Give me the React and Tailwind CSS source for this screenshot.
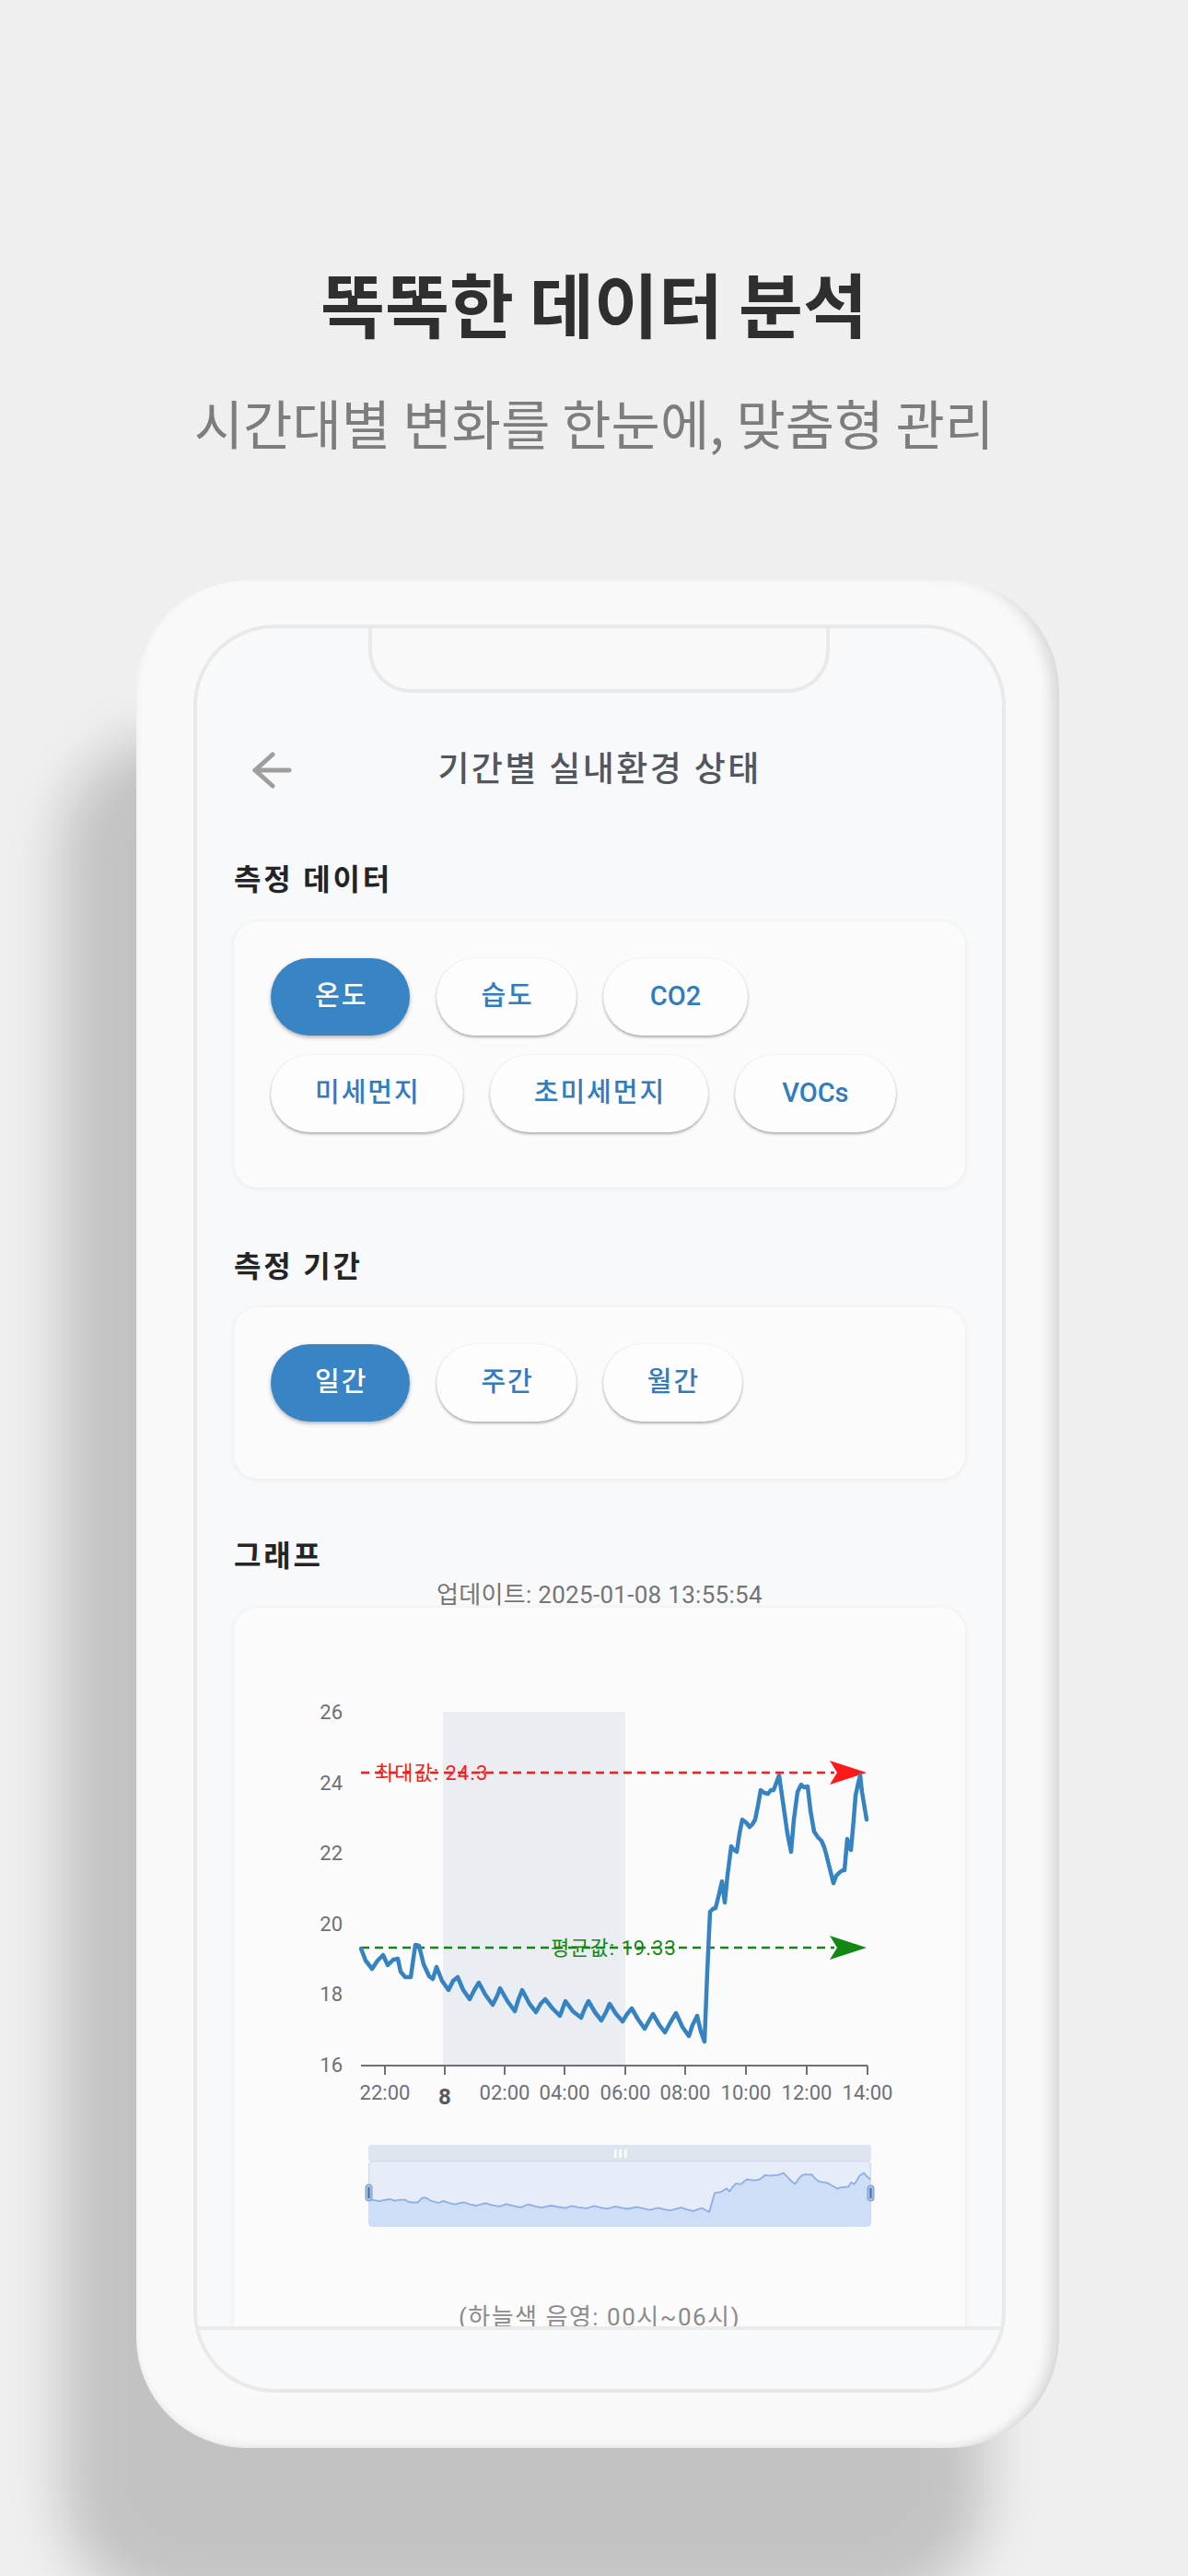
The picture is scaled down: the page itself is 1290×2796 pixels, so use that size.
import React from "react";

const PTS = [[392,2115],[397,2128],[404,2137],[410,2128],[416,2122],[421,2133],[427,2127],[432,2126],[435,2140],[440,2146],[446,2146],[449,2125],[451,2111],[455,2112],[460,2132],[466,2145],[470,2148],[474,2135],[480,2150],[487,2160],[492,2150],[497,2146],[503,2160],[510,2170],[515,2160],[520,2152],[527,2165],[535,2176],[540,2166],[543,2158],[551,2172],[559,2183],[563,2170],[567,2160],[575,2175],[582,2184],[587,2175],[592,2170],[600,2180],[608,2188],[611,2180],[614,2172],[622,2183],[631,2190],[635,2180],[639,2172],[646,2184],[653,2193],[658,2184],[662,2175],[669,2186],[676,2194],[681,2186],[686,2180],[693,2192],[700,2202],[705,2193],[709,2186],[716,2198],[722,2206],[728,2195],[734,2185],[741,2200],[748,2210],[752,2198],[757,2188],[761,2205],[765,2216],[768,2140],[771,2075],[774,2072],[777,2071],[781,2055],[784,2042],[787,2065],[790,2035],[794,2004],[797,2008],[800,2010],[803,1990],[806,1975],[810,1978],[814,1983],[817,1980],[820,1975],[823,1960],[826,1943],[830,1946],[834,1947],[837,1943],[840,1943],[843,1935],[846,1927],[849,1948],[852,1969],[855,1990],[859,2010],[862,1975],[866,1945],[870,1937],[873,1940],[877,1939],[880,1965],[884,1988],[888,1994],[892,1998],[895,2005],[897,2012],[901,2028],[905,2044],[908,2036],[912,2032],[915,2030],[917,2030],[920,1996],[922,2006],[924,2008],[927,1975],[929,1949],[932,1935],[934,1927],[936,1945],[938,1957],[941,1975]];

const FONT = "Roboto, 'Noto Sans CJK KR', sans-serif";

function Chart() {
  const line = PTS.map((p, i) => (i ? "L" : "M") + p[0] + " " + p[1]).join(" ");
  const miniPts = PTS.map(([x, y]) => [400 + (x - 392) * (546 / 550), 2404.4 - (2241 - y) * 0.1462]);
  const mini = miniPts.map((p, i) => (i ? "L" : "M") + p[0].toFixed(1) + " " + p[1].toFixed(1)).join(" ");
  const miniArea = mini + " L945 2416 L401 2416 Z";
  const yl = [[26, 1858], [24, 1935], [22, 2011], [20, 2088], [18, 2164], [16, 2241]];
  const ticks = [418, 483, 548, 613, 679, 744, 810, 876, 942];
  const xl = ["22:00", "8", "02:00", "04:00", "06:00", "08:00", "10:00", "12:00", "14:00"];
  return (
    <svg width="794" height="700" viewBox="254 1745 794 700" className="block" style={{ fontFamily: FONT }}>
      <rect x="481" y="1858" width="198" height="384" fill="#eaedf2" />
      {yl.map(([v, y]) => (
        <text key={v} x="372" y={y} textAnchor="end" dominantBaseline="central" fontSize="22" fill="#6e7079">{v}</text>
      ))}
      <line x1="392" x2="942" y1="2242" y2="2242" stroke="#6e7079" strokeWidth="2" />
      {ticks.map((x) => (
        <line key={x} x1={x} x2={x} y1="2242" y2="2252" stroke="#6e7079" strokeWidth="2" />
      ))}
      {xl.map((t, i) => (
        <text key={t} x={ticks[i]} y={i === 1 ? 2276 : 2271} textAnchor="middle" dominantBaseline="central" fontSize={i === 1 ? 24 : 22} fontWeight={i === 1 ? 700 : 400} fill={i === 1 ? "#555a62" : "#6e7079"}>{t}</text>
      ))}
      <line x1="392" x2="906" y1="1924" y2="1924" stroke="#ff1a1a" strokeWidth="2.5" strokeDasharray="9 6" />
      <path d="M941 1924 L901 1911 L909 1924 L901 1937 Z" fill="#ff1a1a" />
      <text x="407" y="1924" dominantBaseline="central" fontSize="22" letterSpacing="1" fill="#ff1a1a">최대값: 24.3</text>
      <line x1="392" x2="906" y1="2114" y2="2114" stroke="#118811" strokeWidth="2.5" strokeDasharray="9 6" />
      <path d="M941 2114 L901 2101 L909 2114 L901 2127 Z" fill="#118811" />
      <text x="598" y="2114" dominantBaseline="central" fontSize="22" letterSpacing="1" fill="#118811">평균값: 19.33</text>
      <path d={line} fill="none" stroke="#3583c3" strokeWidth="4.5" strokeLinejoin="round" strokeLinecap="round" />

      <rect x="400" y="2328" width="546" height="18" rx="3" fill="#dfe5f0" />
      <rect x="667" y="2333" width="2.5" height="9" fill="#ffffff" />
      <rect x="672.5" y="2333" width="2.5" height="9" fill="#ffffff" />
      <rect x="678" y="2333" width="2.5" height="9" fill="#ffffff" />
      <rect x="400.75" y="2345.75" width="544.5" height="70.5" rx="4" fill="#e6edf9" stroke="#d3dcee" strokeWidth="1.5" />
      <path d={miniArea} fill="#cfdef7" />
      <path d={mini} fill="none" stroke="#8eaee6" strokeWidth="1.8" strokeLinejoin="round" />
      <rect x="397" y="2371" width="7" height="18" rx="3" fill="#a9bedf" stroke="#7b9bcc" strokeWidth="1" />
      <rect x="399.5" y="2374" width="2" height="12" fill="#3f6fb5" />
      <rect x="942" y="2372" width="7" height="17" rx="3" fill="#a9bedf" stroke="#7b9bcc" strokeWidth="1" />
      <rect x="944.5" y="2375" width="2" height="11" fill="#3f6fb5" />
    </svg>
  );
}

function Chip({ label, active, latin }) {
  const pad = latin ? "px-[51px] tracking-normal" : "pl-[48px] pr-[46px] tracking-[2px]";
  if (active) {
    return (
      <div className={"h-[84px] rounded-full bg-[#3884c4] text-white flex items-center justify-center text-[29px] font-medium shadow-[0_2px_4px_rgba(0,0,0,0.3)] " + pad}>
        {label}
      </div>
    );
  }
  return (
    <div className={"h-[84px] rounded-full bg-[#fdfdfd] text-[#2f7cbf] flex items-center justify-center text-[29px] font-medium shadow-[0_2px_3px_rgba(0,0,0,0.3),0_0_2px_rgba(0,0,0,0.08)] " + pad}>
      {label}
    </div>
  );
}

function Card({ children, className }) {
  return (
    <div className={"rounded-[26px] bg-[#fbfbfc] shadow-[0_1px_6px_rgba(0,0,0,0.07)] " + className}>{children}</div>
  );
}

export default function App() {
  return (
    <div className="w-[1290px] h-[2796px] overflow-hidden bg-[#efefef] font-['Roboto','Noto_Sans_CJK_KR',sans-serif]">
      <div className="pt-[290px] text-center font-['Noto_Sans_CJK_KR',sans-serif]">
        <div className="text-[76px] leading-[76px] font-bold text-[#2f2f2f]">똑똑한 데이터 분석</div>
        <div className="mt-[63px] text-[58px] leading-[58px] font-normal text-[#7d7d7d]">시간대별 변화를 한눈에, 맞춤형 관리</div>
      </div>

      <div className="ml-[148px] mt-[143px] w-[1002px] h-[2027px] rounded-[120px] bg-[#f9f9f9] pl-[62px] pt-[48px] shadow-[inset_-18px_0_16px_-10px_rgba(0,0,0,0.14),inset_6px_0_8px_-6px_rgba(0,0,0,0.06),inset_0_-10px_12px_-8px_rgba(0,0,0,0.07),-80px_170px_60px_rgba(0,0,0,0.19)]">
        <div className="relative w-[882px] h-[1919px] rounded-[88px] border-[4px] border-[#e9e9e9] bg-[#f8f9fa] overflow-hidden flex flex-col">
          <div className="absolute left-[186px] top-[-4px] w-[501px] h-[74px] bg-[#f9f9f9] border-[4px] border-t-0 border-[#e9e9e9] rounded-b-[46px]" />

          <div className="h-[1843px] overflow-hidden px-[40px] pt-[114px] shrink-0">
            <div className="h-[80px] flex items-center -mx-[40px] px-[59px]">
              <svg width="44" height="40" viewBox="0 0 44 40" fill="none" stroke="#9e9e9e" strokeWidth="5" strokeLinecap="round" strokeLinejoin="round">
                <path d="M41 20 H4" />
                <path d="M23 3 L4 20 L23 37" />
              </svg>
              <div className="flex-1 text-center text-[37px] leading-[40px] tracking-[2.4px] font-medium text-[#52575d]">기간별 실내환경 상태</div>
              <div className="w-[44px]" />
            </div>

            <div className="mt-[59px] text-[32px] leading-[40px] tracking-[2.8px] font-semibold text-[#242424]">측정 데이터</div>
            <Card className="mt-[25px] pl-[40px] pr-[30px] pt-[40px] pb-[60px]">
              <div className="flex flex-wrap gap-x-[29px] gap-y-[21px]">
                <Chip label="온도" active />
                <Chip label="습도" />
                <Chip label="CO2" latin />
                <Chip label="미세먼지" />
                <Chip label="초미세먼지" />
                <Chip label="VOCs" latin />
              </div>
            </Card>

            <div className="mt-[66px] text-[32px] leading-[40px] tracking-[2.8px] font-semibold text-[#242424]">측정 기간</div>
            <Card className="mt-[24px] pl-[40px] pr-[30px] pt-[40px] pb-[62px]">
              <div className="flex gap-x-[29px]">
                <Chip label="일간" active />
                <Chip label="주간" />
                <Chip label="월간" />
              </div>
            </Card>

            <div className="mt-[64px] text-[32px] leading-[40px] tracking-[2.8px] font-semibold text-[#242424]">그래프</div>
            <div className="mt-[8px] text-center text-[26px] leading-[28px] tracking-[0.3px] text-[#757575]">업데이트: 2025-01-08 13:55:54</div>
            <Card className="h-[900px]">
              <Chart />
              <div className="mt-[54px] text-center text-[26px] leading-[32px] tracking-[1.5px] text-[#8b8b8b]">(하늘색 음영: 00시~06시)</div>
            </Card>
          </div>
          <div className="h-[4px] bg-[#ebebeb] shrink-0" />
          <div className="flex-1" />
        </div>
      </div>
    </div>
  );
}
